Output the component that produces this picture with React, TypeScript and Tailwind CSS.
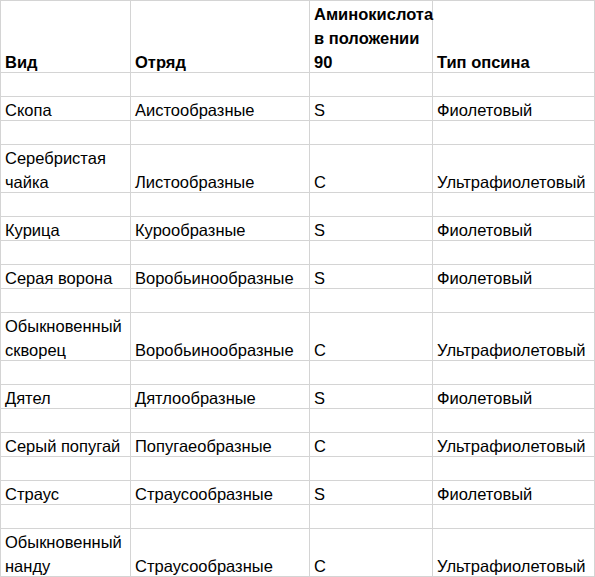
import React from "react";

type Row = {
  vid: string[];
  otryad: string;
  amino: string;
  opsin: string;
};

const rows: Row[] = [
  { vid: ["Скопа"], otryad: "Аистообразные", amino: "S", opsin: "Фиолетовый" },
  { vid: ["Серебристая", "чайка"], otryad: "Листообразные", amino: "C", opsin: "Ультрафиолетовый" },
  { vid: ["Курица"], otryad: "Курообразные", amino: "S", opsin: "Фиолетовый" },
  { vid: ["Серая ворона"], otryad: "Воробьинообразные", amino: "S", opsin: "Фиолетовый" },
  { vid: ["Обыкновенный", "скворец"], otryad: "Воробьинообразные", amino: "C", opsin: "Ультрафиолетовый" },
  { vid: ["Дятел"], otryad: "Дятлообразные", amino: "S", opsin: "Фиолетовый" },
  { vid: ["Серый попугай"], otryad: "Попугаеобразные", amino: "C", opsin: "Ультрафиолетовый" },
  { vid: ["Страус"], otryad: "Страусообразные", amino: "S", opsin: "Фиолетовый" },
  { vid: ["Обыкновенный", "нанду"], otryad: "Страусообразные", amino: "C", opsin: "Ультрафиолетовый" },
];

const Cell = ({ lines, h, bold }: { lines: string[]; h: string; bold?: boolean }) => (
  <div
    className={`flex items-end border-r border-b border-[#d4d4d4] pl-[4px] ${h} ${bold ? "font-bold" : "font-normal"}`}
  >
    <div className="mb-[-2px] whitespace-nowrap leading-[24px]">
      {lines.map((l, i) => (
        <div key={i}>{l}</div>
      ))}
    </div>
  </div>
);

const BlankRow = () => (
  <>
    <div className="h-[24px] border-r border-b border-[#d4d4d4]"></div>
    <div className="h-[24px] border-r border-b border-[#d4d4d4]"></div>
    <div className="h-[24px] border-r border-b border-[#d4d4d4]"></div>
    <div className="h-[24px] border-r border-b border-[#d4d4d4]"></div>
  </>
);

export default function App() {
  return (
    <div className="h-[577px] w-[595px] overflow-hidden bg-white font-['Liberation_Sans',Arial,sans-serif] text-[16.5px] text-black">
      <div className="grid grid-cols-[130px_179px_123px_162px] border-t border-l border-[#d4d4d4]">
        <Cell lines={["Вид"]} h="h-[72px]" bold />
        <Cell lines={["Отряд"]} h="h-[72px]" bold />
        <Cell lines={["Аминокислота", "в положении", "90"]} h="h-[72px]" bold />
        <Cell lines={["Тип опсина"]} h="h-[72px]" bold />
        {rows.map((r, i) => {
          const h = r.vid.length > 1 ? "h-[48px]" : "h-[24px]";
          return (
            <React.Fragment key={i}>
              <BlankRow />
              <Cell lines={r.vid} h={h} />
              <Cell lines={[r.otryad]} h={h} />
              <Cell lines={[r.amino]} h={h} />
              <Cell lines={[r.opsin]} h={h} />
            </React.Fragment>
          );
        })}
      </div>
    </div>
  );
}
